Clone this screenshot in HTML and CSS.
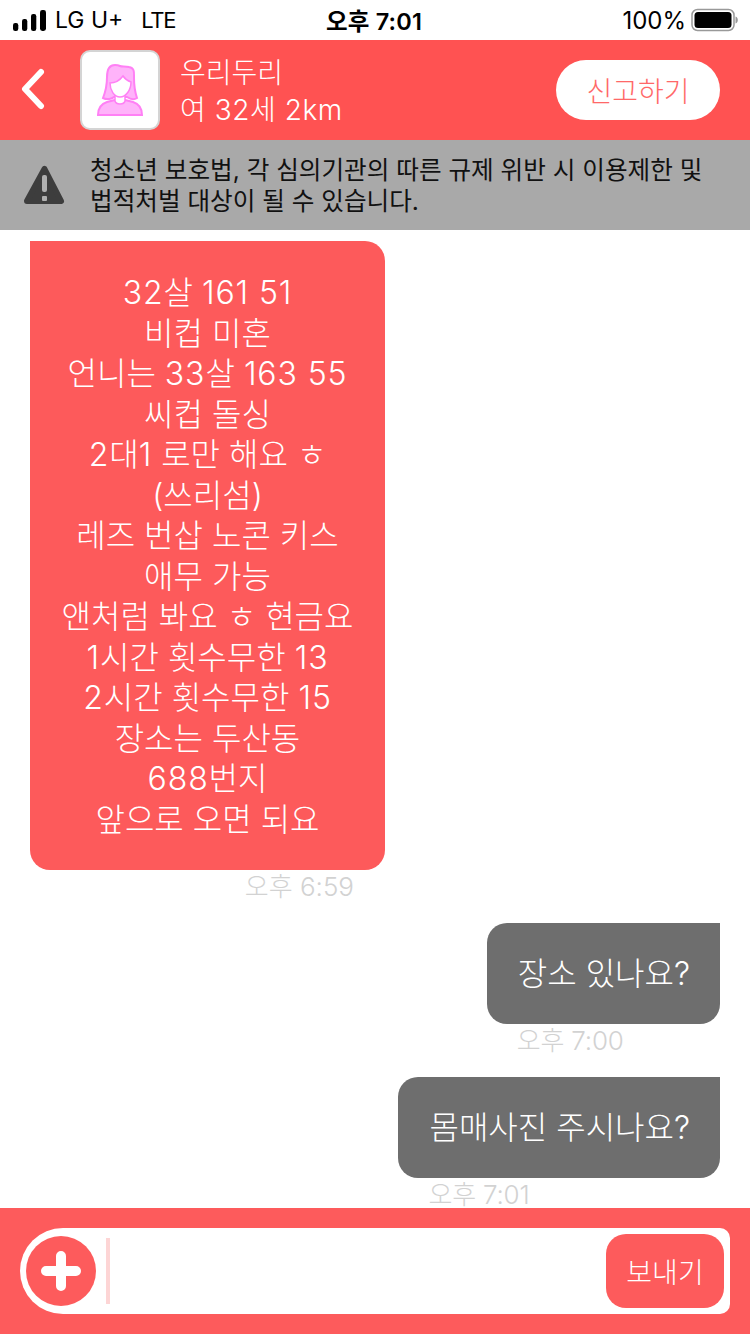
FILE: index.html
```html
<!DOCTYPE html>
<html lang="ko">
<head>
<meta charset="utf-8">
<title>채팅</title>
<link rel="stylesheet" href="styles.css">
</head>
<body>
<div class="app">
  <div class="status">
    <div class="status-left">
      <svg class="signal" width="34" height="21" viewBox="0 0 34 21"><rect x="0" y="13" width="5.300" height="8" rx="2.200"/><rect x="9" y="9" width="5.300" height="12" rx="2.200"/><rect x="18" y="4" width="5.300" height="17" rx="2.200"/><rect x="27" y="0" width="6" height="21" rx="2.400"/></svg>
      <span class="carrier">LG U+</span><span class="carrier lte">LTE</span>
    </div>
    <div class="clock">오후 7:01</div>
    <div class="status-right">
      <span class="pct">100%</span>
      <svg width="48" height="24" viewBox="0 0 48 24"><rect x="2" y="1.500" width="42" height="21" rx="5.500" fill="none" stroke="#999" stroke-width="1.500"/><rect x="4.500" y="4" width="37" height="16" rx="3.500" fill="#000"/><path d="M45.500 8.500c1.500.4 2.300 1.800 2.300 3.500s-.8 3.100-2.300 3.500z" fill="#999"/></svg>
    </div>
  </div>
  <header class="top">
    <svg class="back" width="30" height="44" viewBox="0 0 30 44"><path d="M23 4 L7 21 L23 38" fill="none" stroke="#fff" stroke-width="6" stroke-linecap="round" stroke-linejoin="round"/></svg>
    <div class="avatar">
      <svg width="76" height="76" viewBox="2 2 76 76"><path d="M18 65C18 58 21 54 27 52L35 50C37 54 43 54 45 50L53 52C59 54 62 58 62 65Z" fill="#ffb3fa" stroke="#ff80f5" stroke-width="2"/><path d="M35 15C29 15 27 20 27 27C27 36 25 43 23 48C27 50 32 49 34 47L47 47C50 49 54 50 57 48C55 42 54 36 54 28C54 23 55 18 49 17C45 16 42 17 40 16C38 15 37 15 35 15Z" fill="#ffb3fa" stroke="#ff80f5" stroke-width="2"/><path d="M35 45V51C36 55 44 55 45 51V45Z" fill="#fff" stroke="#ff80f5" stroke-width="1.500"/><path d="M30 33C35 33 40 30 43 26C45 29 48 31 51 32C51 40 46 47 40 47C34 47 30 40 30 33Z" fill="#fff" stroke="#ff80f5" stroke-width="1.500"/></svg>
    </div>
    <div class="who">
      <div>우리두리</div>
      <div class="who-meta">여 32세 2km</div>
    </div>
    <button class="report" type="button">신고하기</button>
  </header>
  <div class="warn">
    <svg class="warn-icon" width="44" height="44" viewBox="0 0 44 44"><path d="M21.500 6 L38 38 H4 Z" fill="#3d3d3d" stroke="#3d3d3d" stroke-width="6" stroke-linejoin="round"/><rect x="19" y="12" width="5" height="17" rx="2" fill="#b0b0b0"/><rect x="19" y="33" width="5" height="5" rx="1" fill="#b0b0b0"/></svg>
    <p class="warn-text">청소년 보호법, 각 심의기관의 따른 규제 위반 시 이용제한 및<br>법적처벌 대상이 될 수 있습니다.</p>
  </div>
  <main class="chat">
    <div class="msg msg-in">
      <div class="bubble bubble-in"><span class="num">32</span>살 <span class="num">161 51</span><br>비컵 미혼<br>언니는 <span class="num">33</span>살 <span class="num">163 55</span><br>씨컵 돌싱<br><span class="num">2</span>대<span class="num">1</span> 로만 해요 ㅎ<br>(쓰리섬)<br>레즈 번삽 노콘 키스<br>애무 가능<br>앤처럼 봐요 ㅎ 현금요<br><span class="num">1</span>시간 횟수무한 <span class="num">13</span><br><span class="num">2</span>시간 횟수무한 <span class="num">15</span><br>장소는 두산동<br><span class="num">688</span>번지<br>앞으로 오면 되요</div>
      <time class="stamp stamp-in">오후 6:59</time>
    </div>
    <div class="msg msg-out">
      <div class="bubble bubble-out">장소 있나요?</div>
      <time class="stamp stamp-out">오후 7:00</time>
    </div>
    <div class="msg msg-out">
      <div class="bubble bubble-out">몸매사진 주시나요?</div>
      <time class="stamp stamp-out">오후 7:01</time>
    </div>
  </main>
  <footer class="composer">
    <div class="field">
      <svg class="plus" width="70" height="70" viewBox="0 0 70 70"><circle cx="35" cy="35" r="35" fill="#fd5b5c"/><path d="M35 20 V50 M20 35 H50" stroke="#fff" stroke-width="10" stroke-linecap="round"/></svg>
      <span class="caret"></span>
      <button class="send" type="button">보내기</button>
    </div>
  </footer>
</div>
</body>
</html>
```
FILE: styles.css
```css
* { box-sizing: border-box; }
html, body { margin: 0; padding: 0; }
body { font-family: "Inter", "Noto Sans CJK KR", sans-serif; background: #fff; }
.app { width: 750px; height: 1334px; display: flex; flex-direction: column; overflow: hidden; }

.status { height: 40px; flex: none; display: flex; align-items: center; justify-content: space-between; padding: 0 12px 0 13px; position: relative; color: #000; }
.status-left { display: flex; align-items: center; gap: 8px; font-size: 23px; }
.lte { margin-left: 10px; font-size: 22px; letter-spacing: -1.300px; }
.clock { position: absolute; left: 0; right: 2px; text-align: center; font-size: 23.500px; font-weight: 600; letter-spacing: 0.200px; pointer-events: none; }
.status-right { display: flex; align-items: center; gap: 4px; font-size: 24px; }

.top { height: 100px; flex: none; background: #ff5252; display: flex; align-items: center; padding: 0 30px 0 18px; color: #fff; }
.back { flex: none; }
.avatar { width: 80px; height: 80px; margin-left: 32px; background: #fff; border: 2px solid #d4d4d4; border-radius: 10px; display: flex; align-items: center; justify-content: center; flex: none; }
.who { margin-left: 20px; flex: 1; font-size: 28px; line-height: 37px; font-weight: 300; padding-top: 3px; }
.who-meta { letter-spacing: 0.550px; }
.report { width: 164px; height: 60px; border: 0; border-radius: 30px; background: #fff; color: #ff6868; font: 300 28px "Noto Sans CJK KR", sans-serif; padding: 0; }

.warn { height: 90px; flex: none; background: #a9a9a9; display: flex; align-items: center; padding-left: 23px; color: #111; }
.warn-icon { flex: none; }
.warn-text { margin: 0 0 0 23px; padding-top: 2px; font-size: 24.600px; line-height: 31px; font-weight: 400; }

.chat { flex: 1; min-height: 0; padding: 11px 30px 0; display: flex; flex-direction: column; gap: 20px; }
.msg { display: flex; flex-direction: column; width: fit-content; }
.msg-out { align-self: flex-end; }
.msg-in { align-self: flex-start; }
.bubble { color: #fff; font-size: 32px; font-weight: 300; text-align: center; white-space: nowrap; }
.num { letter-spacing: 0.900px; }
.bubble-in { width: 355px; background: #fd5a5b; border-radius: 0 20px 20px 20px; padding: 32px 10px 30px; line-height: 40.500px; }
.bubble-out { background: #6e6e6e; border-radius: 20px 0 20px 20px; padding: 0 30px 0 31px; height: 101px; line-height: 101px; }
.stamp { font-size: 26px; line-height: 33px; color: #d2d2d2; font-weight: 300; }
.stamp-in { text-align: right; padding-right: 31px; }
.stamp-out { text-align: left; padding-left: 30px; letter-spacing: -0.200px; }

.composer { height: 126px; flex: none; background: #fd5b5c; padding: 20px; }
.field { height: 86px; width: 710px; background: #fff; border-radius: 43px 10px 10px 43px; display: flex; align-items: center; padding: 0 6px; }
.plus { flex: none; }
.caret { width: 4px; height: 66px; background: #fdd5d5; margin-left: 10px; }
.send { margin-left: auto; width: 118px; height: 74px; border: 0; border-radius: 20px; background: #fd5b5c; color: #fff; font: 300 28px "Noto Sans CJK KR", sans-serif; padding: 0; }
```
